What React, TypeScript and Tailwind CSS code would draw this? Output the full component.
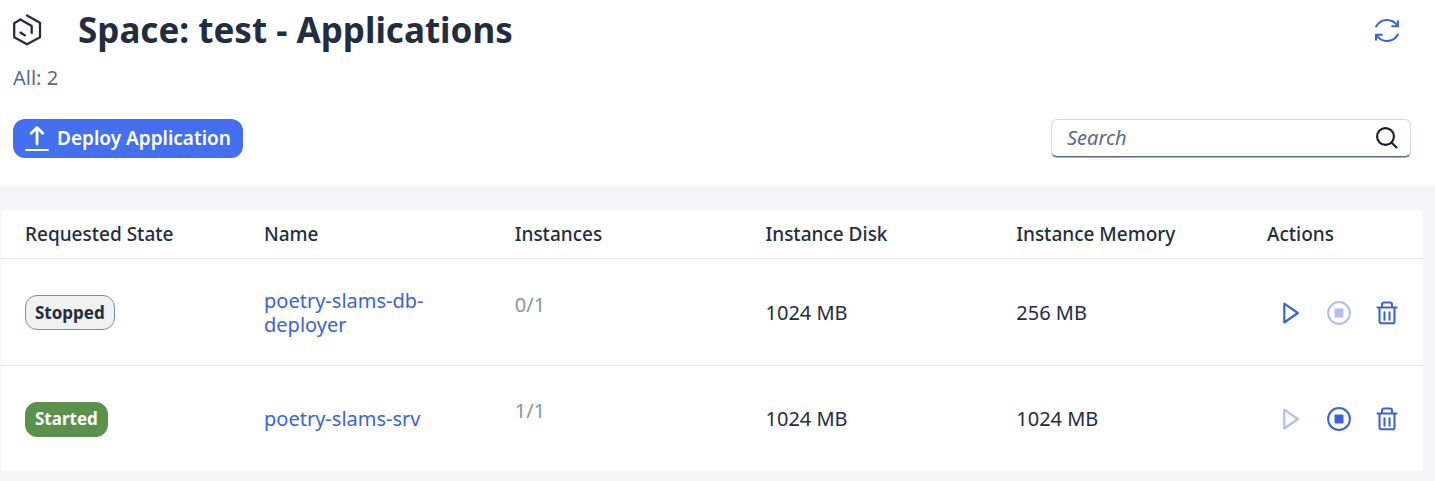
import React from "react";

type AppState = "Stopped" | "Started";

interface AppRow {
  state: AppState;
  name: string;
  instances: string;
  disk: string;
  memory: string;
}

const rows: AppRow[] = [
  { state: "Stopped", name: "poetry-slams-db-deployer", instances: "0/1", disk: "1024 MB", memory: "256 MB" },
  { state: "Started", name: "poetry-slams-srv", instances: "1/1", disk: "1024 MB", memory: "1024 MB" },
];

const columns = ["Requested State", "Name", "Instances", "Instance Disk", "Instance Memory", "Actions"];

function SpaceIcon() {
  return (
    <svg width="30" height="32" viewBox="0 0 30 32" fill="none" stroke="currentColor" strokeWidth="2.3" strokeLinecap="round" strokeLinejoin="round" aria-hidden="true">
      <path d="M15 1.500 28 8.700v14.600L15 30.300 2.200 23.300V9.200L8.400 5.500 19.700 12V19" />
      <path d="m8.400 18.600 4.400 2.700" />
    </svg>
  );
}

function RefreshIcon() {
  return (
    <svg width="24" height="24" viewBox="0 0 24 24" fill="none" stroke="currentColor" strokeWidth="2.100" strokeLinecap="round" strokeLinejoin="round" aria-hidden="true">
      <path d="M1.200 8.500C3.400 4.500 7.300 2 12 2c4.400 0 8.200 2.300 10.600 6" />
      <path d="M23 3.300v5h-5.800" />
      <path d="M22.800 16.500c-2.200 4-6.100 6.500-10.800 6.500-4.400 0-8.200-2.300-10.600-6" />
      <path d="M1 21.700v-5h5.800" />
    </svg>
  );
}

function UploadIcon() {
  return (
    <svg width="24" height="26" viewBox="0 0 24 26" fill="none" stroke="currentColor" strokeWidth="2" strokeLinecap="round" strokeLinejoin="round" aria-hidden="true">
      <path strokeWidth="2.800" d="M12 18V2M6.200 7.200 12 1.600l5.800 5.600" />
      <path d="M1 24h22" />
    </svg>
  );
}

function SearchIcon() {
  return (
    <svg width="24" height="24" viewBox="0 0 24 24" fill="none" stroke="currentColor" strokeWidth="2.100" strokeLinecap="round" aria-hidden="true">
      <circle cx="10.500" cy="10.500" r="8.400" />
      <path d="m16.500 16.500 5 5" />
    </svg>
  );
}

function PlayIcon() {
  return (
    <svg width="24" height="24" viewBox="0 0 24 24" fill="none" stroke="currentColor" strokeWidth="2.200" strokeLinejoin="round" aria-hidden="true">
      <path d="M5.300 2.600v18.900L18.800 12z" />
    </svg>
  );
}

function StopIcon() {
  return (
    <svg width="24" height="24" viewBox="0 0 24 24" fill="none" stroke="currentColor" strokeWidth="2" aria-hidden="true">
      <circle cx="12" cy="12" r="10.900" />
      <rect x="7.500" y="7.500" width="9" height="9" rx="1" fill="currentColor" stroke="none" />
    </svg>
  );
}

function TrashIcon() {
  return (
    <svg width="24" height="24" viewBox="0 0 24 24" fill="none" stroke="currentColor" strokeWidth="2.100" strokeLinecap="round" strokeLinejoin="round" aria-hidden="true">
      <path d="M2.500 6.500h19" />
      <path d="M7 6V3.500A2 2 0 0 1 9 1.500h6a2 2 0 0 1 2 2V6" />
      <path d="M4.500 7v13.500a1.800 1.800 0 0 0 1.800 1.800h11.400a1.800 1.800 0 0 0 1.800-1.800V7" />
      <path d="M9.500 11.300v7.400M14.500 11.300v7.400" />
    </svg>
  );
}

function ActionButton({ label, disabled, children }: { label: string; disabled?: boolean; children: React.ReactNode }) {
  return (
    <button type="button" aria-label={label} disabled={disabled} className="flex h-10 w-12 items-center justify-center text-[#3b63d8] disabled:opacity-40">
      {children}
    </button>
  );
}

function StateBadge({ state }: { state: AppState }) {
  const tone =
    state === "Started"
      ? "border-[#5b914d] bg-[#5b914d] text-white"
      : "border-[#788fa6] bg-[#eff1f2] text-[#232d3f]";
  return (
    <span className={`inline-flex h-[35px] items-center rounded-xl border px-[9px] text-[17px] font-bold ${tone}`}>
      {state}
    </span>
  );
}

export default function App() {
  return (
    <div className="min-h-screen bg-[#f4f5f8] font-['Noto_Sans',sans-serif] text-xl text-[#232d3f]">
      <header className="bg-white pr-6 pb-7 pl-3">
        <div className="flex h-15 items-center">
          <SpaceIcon />
          <h1 className="ml-9 flex-1 text-[35px] leading-10 font-bold">Space: test - Applications</h1>
          <button type="button" aria-label="Refresh" className="flex h-10 w-12 items-center justify-center text-[#3b63d8]">
            <RefreshIcon />
          </button>
        </div>
        <p className="px-px pt-1 text-xl leading-7 text-[#5b6b82]">All: 2</p>
        <div className="flex items-start justify-between pt-[27px] pl-px">
          <button type="button" className="flex h-[39px] items-center gap-2 rounded-xl bg-[#4470f0] px-3 text-[19px] font-semibold text-white">
            <UploadIcon />
            Deploy Application
          </button>
          <div className="flex h-[38px] w-[360px] items-center rounded-md border border-[#d5d9e2] border-b-[#5b6b82] bg-white pr-[11px] pl-[15px] shadow-[0_1px_0_#a9b2c3]">
            <input type="search" aria-label="Search" placeholder="Search" className="min-w-0 flex-1 bg-transparent outline-none placeholder:text-[#5b6b82] placeholder:italic" />
            <button type="button" aria-label="Run search" className="text-[#131e29]">
              <SearchIcon />
            </button>
          </div>
        </div>
      </header>
      <main className="pt-6 pr-3 pl-px">
        <table className="w-full table-fixed border-collapse bg-white text-left">
          <colgroup>
            <col className="w-[239px]" />
            <col />
            <col />
            <col />
            <col />
            <col className="w-[180px]" />
          </colgroup>
          <thead>
            <tr className="h-12 border-b border-[#e1e3e6]">
              {columns.map((c) => (
                <th key={c} scope="col" className="pt-0.5 pl-6 text-[19px] font-medium whitespace-nowrap">
                  {c}
                </th>
              ))}
            </tr>
          </thead>
          <tbody>
            {rows.map((r) => (
              <tr key={r.name} className="h-[107px] border-b border-[#e1e3e6] last:h-[106px] last:border-b-0">
                <td className="pt-0.5 pl-6">
                  <StateBadge state={r.state} />
                </td>
                <td className="pt-0.5 pr-10 pl-6 leading-6">
                  <a href="#" className="text-[#3b63d8]">
                    {r.name}
                  </a>
                </td>
                <td className="pt-0.5 pb-4 pl-6 text-[#8696a9]">{r.instances}</td>
                <td className="pt-0.5 pl-6">{r.disk}</td>
                <td className="pt-0.5 pl-6">{r.memory}</td>
                <td className="pt-0.5 pl-6">
                  <div className="flex">
                    <ActionButton label={`Start ${r.name}`} disabled={r.state === "Started"}>
                      <PlayIcon />
                    </ActionButton>
                    <ActionButton label={`Stop ${r.name}`} disabled={r.state === "Stopped"}>
                      <StopIcon />
                    </ActionButton>
                    <ActionButton label={`Delete ${r.name}`}>
                      <TrashIcon />
                    </ActionButton>
                  </div>
                </td>
              </tr>
            ))}
          </tbody>
        </table>
      </main>
    </div>
  );
}
